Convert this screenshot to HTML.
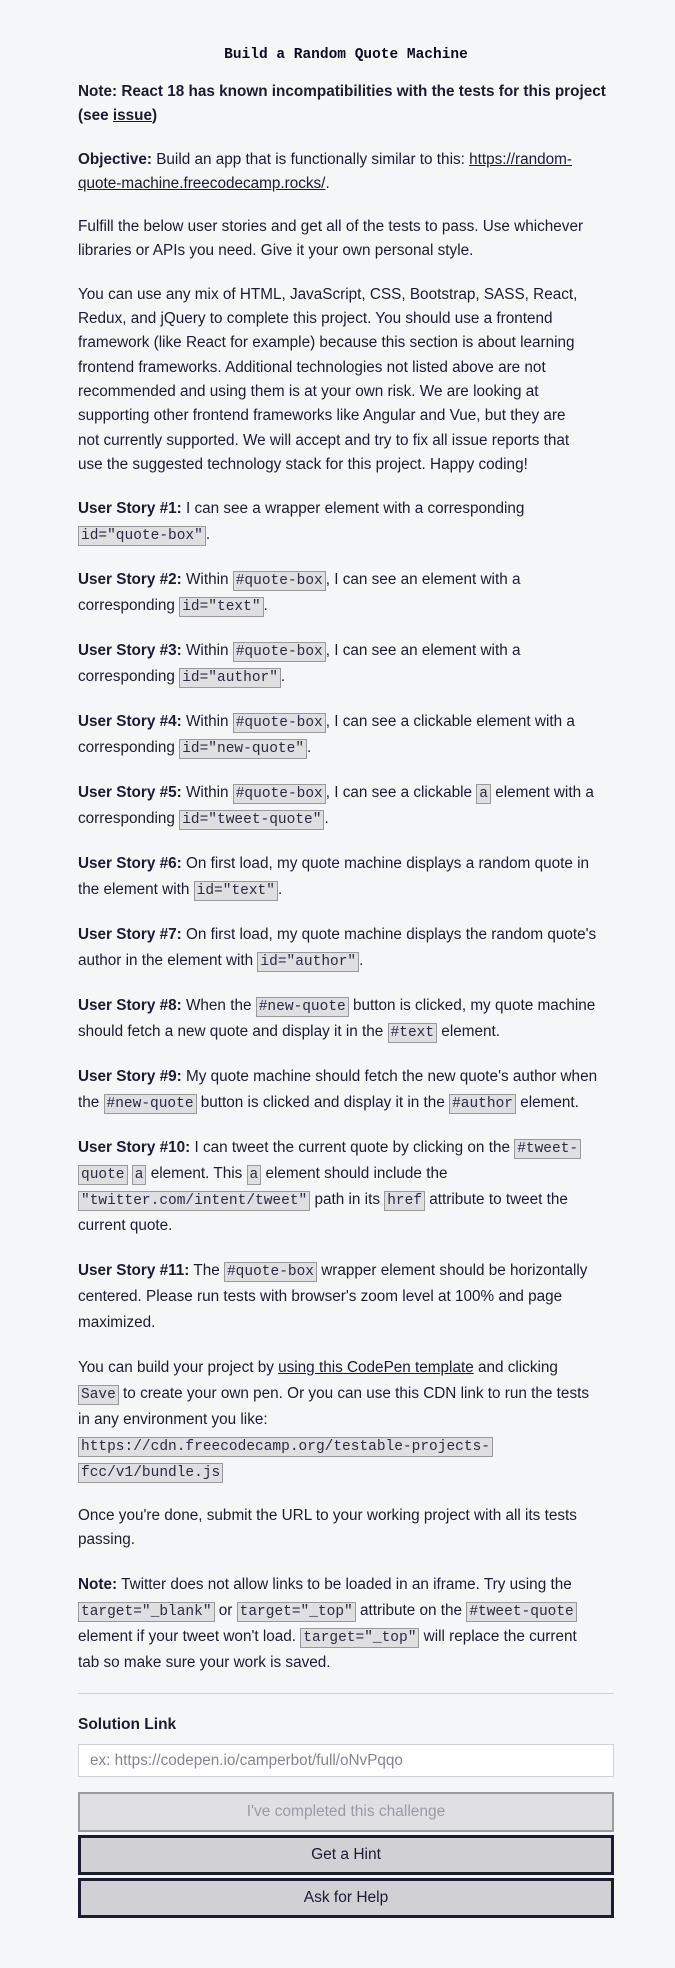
<!DOCTYPE html>
<html><head><meta charset="utf-8"><style>
html,body{margin:0;padding:0;background:#f5f6f7;}
body{width:675px;height:1968px;overflow:hidden;color:#1b1b32;font-family:"Liberation Sans",sans-serif;font-size:15.3px;}
.wrap{position:absolute;left:78px;width:536px;top:0;}
h1{font-family:"Liberation Mono",monospace;font-size:14.5px;font-weight:bold;text-align:center;margin:45px 0 15px;line-height:20px;color:#0a0a23;}
p{margin:0 0 19px;line-height:24.3px;white-space:nowrap;}
p.c{line-height:26px;}
a{color:#1b1b32;text-decoration:underline;}
code{font-family:"Liberation Mono",monospace;font-size:14.5px;line-height:1;background:#dfdfe2;border:1px solid #999;padding:1px 2px;color:#2a2a40;}
b{color:#1b1b32;}
.lab{position:absolute;top:1716px;font-weight:bold;font-size:15.5px;}
.inp{position:absolute;top:1744px;left:0;border:1px solid #d0d0d5;background:#fff;color:#858591;line-height:32px;padding-left:11px;box-sizing:border-box;width:536px;height:33px;}
.btn{position:absolute;left:0;width:536px;box-sizing:border-box;text-align:center;font-size:15.5px;}
</style></head><body><div class="wrap">
<h1>Build a Random Quote Machine</h1>
<p><b>Note: React 18 has known incompatibilities with the tests for this project<br>(see <a>issue</a>)</b></p>
<p><b>Objective:</b> Build an app that is functionally similar to this: <a>https://random-<br>quote-machine.freecodecamp.rocks/</a>.</p>
<p>Fulfill the below user stories and get all of the tests to pass. Use whichever<br>libraries or APIs you need. Give it your own personal style.</p>
<p>You can use any mix of HTML, JavaScript, CSS, Bootstrap, SASS, React,<br>Redux, and jQuery to complete this project. You should use a frontend<br>framework (like React for example) because this section is about learning<br>frontend frameworks. Additional technologies not listed above are not<br>recommended and using them is at your own risk. We are looking at<br>supporting other frontend frameworks like Angular and Vue, but they are<br>not currently supported. We will accept and try to fix all issue reports that<br>use the suggested technology stack for this project. Happy coding!</p>
<p class="c"><b>User Story #1:</b> I can see a wrapper element with a corresponding<br><code>id="quote-box"</code>.</p>
<p class="c"><b>User Story #2:</b> Within <code>#quote-box</code>, I can see an element with a<br>corresponding <code>id="text"</code>.</p>
<p class="c"><b>User Story #3:</b> Within <code>#quote-box</code>, I can see an element with a<br>corresponding <code>id="author"</code>.</p>
<p class="c"><b>User Story #4:</b> Within <code>#quote-box</code>, I can see a clickable element with a<br>corresponding <code>id="new-quote"</code>.</p>
<p class="c"><b>User Story #5:</b> Within <code>#quote-box</code>, I can see a clickable <code>a</code> element with a<br>corresponding <code>id="tweet-quote"</code>.</p>
<p class="c"><b>User Story #6:</b> On first load, my quote machine displays a random quote in<br>the element with <code>id="text"</code>.</p>
<p class="c"><b>User Story #7:</b> On first load, my quote machine displays the random quote's<br>author in the element with <code>id="author"</code>.</p>
<p class="c"><b>User Story #8:</b> When the <code>#new-quote</code> button is clicked, my quote machine<br>should fetch a new quote and display it in the <code>#text</code> element.</p>
<p class="c"><b>User Story #9:</b> My quote machine should fetch the new quote's author when<br>the <code>#new-quote</code> button is clicked and display it in the <code>#author</code> element.</p>
<p class="c"><b>User Story #10:</b> I can tweet the current quote by clicking on the <code>#tweet-</code><br><code>quote</code> <code>a</code> element. This <code>a</code> element should include the<br><code>"twitter.com/intent/tweet"</code> path in its <code>href</code> attribute to tweet the<br>current quote.</p>
<p class="c"><b>User Story #11:</b> The <code>#quote-box</code> wrapper element should be horizontally<br>centered. Please run tests with browser's zoom level at 100% and page<br>maximized.</p>
<p class="c">You can build your project by <a>using this CodePen template</a> and clicking<br><code>Save</code> to create your own pen. Or you can use this CDN link to run the tests<br>in any environment you like:<br><code>https://cdn.freecodecamp.org/testable-projects-</code><br><code>fcc/v1/bundle.js</code></p>
<p>Once you're done, submit the URL to your working project with all its tests<br>passing.</p>
<p class="c"><b>Note:</b> Twitter does not allow links to be loaded in an iframe. Try using the<br><code>target="_blank"</code> or <code>target="_top"</code> attribute on the <code>#tweet-quote</code><br>element if your tweet won't load. <code>target="_top"</code> will replace the current<br>tab so make sure your work is saved.</p>
</div>
<div class="wrap" style="top:0">
<div style="position:absolute;top:1693px;left:0;width:536px;border-top:1px solid #d0d0d5"></div>
<div class="lab">Solution Link</div>
<div class="inp">ex: https://codepen.io/camperbot/full/oNvPqqo</div>
<div class="btn" style="top:1792px;height:40px;line-height:36px;background:#e0e0e3;border:2px solid #9a9aa2;color:#9a9aa3">I've completed this challenge</div>
<div class="btn" style="top:1835px;height:40px;line-height:34px;background:#d0d0d5;border:3px solid #1b1b32;color:#1b1b32">Get a Hint</div>
<div class="btn" style="top:1878px;height:40px;line-height:34px;background:#d0d0d5;border:3px solid #1b1b32;color:#1b1b32">Ask for Help</div>
</div>
</body></html>
